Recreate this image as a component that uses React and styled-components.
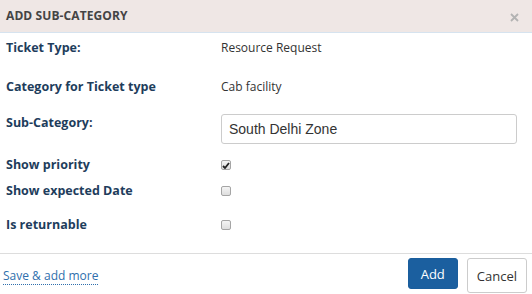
import styled, { createGlobalStyle } from "styled-components";

const GlobalStyle = createGlobalStyle`
    html, body {
        margin: 0;
        padding: 0;
        background: #fff;
    }
    body {
        font-family: "Open Sans", "Liberation Sans", sans-serif;
    }
`;

const Dialog = styled.div`
    width: 532px;
    height: 294px;
    background: #fff;
    display: flex;
    flex-direction: column;
    overflow: hidden;
`;

const Header = styled.div`
    height: 32px;
    flex: none;
    display: flex;
    align-items: center;
    justify-content: space-between;
    padding: 0 12px 0 6px;
    background: #efe7e5;
    border-bottom: 1px solid #d6e3ef;
`;

const Title = styled.h4`
    margin: 0;
    font-size: 12px;
    font-weight: 700;
    color: #444;
    letter-spacing: 0.1px;
    margin-top: -2px;
`;

const Close = styled.button`
    border: none;
    background: none;
    padding: 0;
    width: 10px;
    height: 10px;
    margin-top: 4px;
    display: flex;
    cursor: pointer;
`;

const Body = styled.div`
    padding: 1px 6px 0 6px;
    display: flex;
    flex-direction: column;
`;

const Row = styled.div`
    display: grid;
    grid-template-columns: 215px 1fr;
    align-items: ${(p) => (p.$top ? "flex-start" : "center")};
    min-height: 20px;
    margin-top: ${(p) => p.$gap || 0}px;
`;

const Label = styled.label`
    font-size: 12.5px;
    font-weight: 700;
    color: #1e3d5c;
    line-height: 18px;
`;

const Value = styled.span`
    font-size: 12px;
    color: #333;
    line-height: 18px;
`;

const Input = styled.input`
    box-sizing: border-box;
    width: 296px;
    height: 30px;
    padding: 0 7px;
    border: 1px solid #ccc;
    border-radius: 3px;
    font: 14px "Liberation Sans", Arial, sans-serif;
    color: #333;
    outline: none;
`;

const Check = styled.span`
    box-sizing: border-box;
    width: 10px;
    height: 10px;
    border: 1px solid #a5a5a5;
    border-radius: 2px;
    background: linear-gradient(#f4f4f4, #dedede);
    display: flex;
    align-items: center;
    justify-content: center;
`;

const Divider = styled.hr`
    margin: 18px 0 0 0;
    border: none;
    border-top: 1px solid #ddd;
    height: 0;
`;

const Footer = styled.div`
    display: flex;
    align-items: flex-start;
    justify-content: space-between;
    padding: 4px 5px 0 3px;
`;

const Link = styled.a`
    margin-top: 10px;
    font-size: 12px;
    color: #2f6fad;
    text-decoration: none;
    border-bottom: 1px dotted #2f6fad;
    line-height: 16px;
    cursor: pointer;
`;

const Buttons = styled.div`
    display: flex;
    gap: 9px;
    align-items: flex-start;
`;

const Button = styled.button`
    box-sizing: border-box;
    height: ${(p) => (p.$primary ? 31 : 35)}px;
    padding: 0 ${(p) => (p.$primary ? 12 : 9)}px;
    border-radius: 3px;
    border: 1px solid ${(p) => (p.$primary ? "#1a5e9d" : "#ccc")};
    background: ${(p) => (p.$primary ? "#1b5f9f" : "#fff")};
    color: ${(p) => (p.$primary ? "#fff" : "#333")};
    font: 13px "Open Sans", "Liberation Sans", sans-serif;
    cursor: pointer;
`;

const CheckBox = ({ checked }) => (
    <Check>
        {checked && (
            <svg width="8" height="7" viewBox="0 0 8 7">
                <path d="M1 4 L3 6 L7 1" stroke="#222" strokeWidth="1.8" fill="none" />
            </svg>
        )}
    </Check>
);

const App = () => {
    return (
        <Dialog>
            <GlobalStyle />
            <Header>
                <Title>ADD SUB-CATEGORY</Title>
                <Close aria-label="close">
                    <svg width="9" height="9" viewBox="0 0 9 9">
                        <path d="M1 1 L8 8 M8 1 L1 8" stroke="#b3b3b3" strokeWidth="1.8" />
                    </svg>
                </Close>
            </Header>
            <Body>
                <Row $gap={4}>
                    <Label>Ticket Type:</Label>
                    <Value>Resource Request</Value>
                </Row>
                <Row $gap={19}>
                    <Label>Category for Ticket type</Label>
                    <Value>Cab facility</Value>
                </Row>
                <Row $gap={17} $top>
                    <Label>Sub-Category:</Label>
                    <Input defaultValue="South Delhi Zone" />
                </Row>
                <Row $gap={11}>
                    <Label>Show priority</Label>
                    <CheckBox checked />
                </Row>
                <Row $gap={6}>
                    <Label>Show expected Date</Label>
                    <CheckBox />
                </Row>
                <Row $gap={14}>
                    <Label>Is returnable</Label>
                    <CheckBox />
                </Row>
            </Body>
            <Divider />
            <Footer>
                <Link>Save &amp; add more</Link>
                <Buttons>
                    <Button $primary>Add</Button>
                    <Button>Cancel</Button>
                </Buttons>
            </Footer>
        </Dialog>
    );
};

export default App;
